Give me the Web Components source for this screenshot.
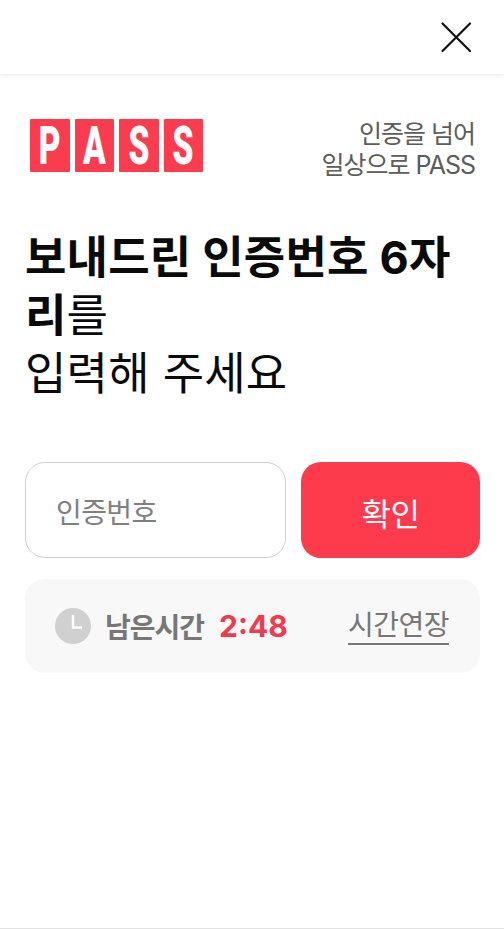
<!DOCTYPE html>
<html lang="ko">
<head>
<meta charset="utf-8">
<title>PASS</title>
<style>
  html, body { margin: 0; background: #fff; }
  body { font-family: Inter, "Noto Sans CJK KR", sans-serif; height: 929px; overflow: hidden; }
</style>
</head>
<body>
<pass-page>
  <top-bar></top-bar>
  <pass-brand>인증을 넘어<br>일상으로 PASS</pass-brand>
  <page-title><b>보내드린 인증번호 6자</b><b>리</b>를<br>입력해 주세요</page-title>
  <code-form placeholder="인증번호" action="확인"></code-form>
  <time-panel remain="2:48" extend="시간연장">남은시간</time-panel>
</pass-page>

<script>
  // small helper, every element has the same constructor otherwise
  class Base extends HTMLElement {
    constructor() {
      super();
      this.attachShadow({ mode: "open" });
    }
  }

  class PassPage extends Base {
    connectedCallback() {
      this.shadowRoot.innerHTML = `
        <style>
          :host { display: flex; flex-direction: column; height: 929px; box-sizing: border-box; border-bottom: 1px solid #e2e2e2; }
        </style>
        <slot></slot>`;
    }
  }

  class TopBar extends Base {
    connectedCallback() {
      this.shadowRoot.innerHTML = `
        <style>
          :host { display: flex; justify-content: flex-end; align-items: center; height: 74px; padding-right: 32px; box-shadow: 0 2px 4px rgba(0,0,0,.06); }
          svg { display: block; }
        </style>
        <svg width="32" height="32" viewBox="0 0 32 32" fill="none" stroke="#111" stroke-width="2.2" stroke-linecap="round" aria-label="닫기">
          <path d="M2.5 2.5 30 30M30 2.5 2.5 30"/>
        </svg>`;
    }
  }

  class PassBrand extends Base {
    connectedCallback() {
      const tiles = [..."PASS"].map(c => `<span class="tile"><i>${c}</i></span>`).join("");
      this.shadowRoot.innerHTML = `
        <style>
          :host { display: flex; justify-content: space-between; align-items: center; padding: 40px 29px 0 30px; height: 62px; }
          .logo { display: flex; gap: 5px; }
          .tile { width: 39.5px; height: 53px; background: #fb3c4e; border-radius: 1px; display: flex; align-items: center; justify-content: center; }
          /* the negative margin takes the unscaled width back out of the tile */
          i { display: block; margin: 0 -10px; font: 900 54px/53px Roboto, sans-serif; font-style: normal; color: #fff; transform: scaleX(.62); }
          .tag { padding-top: 10px; text-align: right; font-size: 25px; line-height: 31px; letter-spacing: -1px; color: #5c5c5c; }
        </style>
        <div class="logo">${tiles}</div>
        <div class="tag"><slot></slot></div>`;
    }
  }

  class PageTitle extends Base {
    connectedCallback() {
      this.shadowRoot.innerHTML = `
        <style>
          :host { display: block; margin: 53px 26px 0 25px; font-size: 45px; line-height: 58px; letter-spacing: .2px; color: #0a0a0a; word-break: break-all; }
          ::slotted(b) { font-weight: 700; }
        </style>
        <slot></slot>`;
    }
  }

  class CodeForm extends Base {
    connectedCallback() {
      this.shadowRoot.innerHTML = `
        <style>
          :host { display: flex; gap: 15px; margin: 59px 24px 0 25px; height: 96px; }
          input { width: 261px; box-sizing: border-box; border: 1px solid #cfcfcf; border-radius: 20px; padding: 5px 30px 0; font: 28px Inter, "Noto Sans CJK KR", sans-serif; letter-spacing: -.6px; outline: 0; background: #fff; }
          input::placeholder { color: #808080; opacity: 1; }
          button { flex: 1; border: 0; border-radius: 20px; padding: 4px 0 0; background: #fd3b4d; color: #fff; font: 32px Inter, "Noto Sans CJK KR", sans-serif; letter-spacing: -.5px; }
        </style>
        <input placeholder="${this.getAttribute("placeholder")}">
        <button>${this.getAttribute("action")}</button>`;
    }
  }

  class TimePanel extends Base {
    connectedCallback() {
      this.shadowRoot.innerHTML = `
        <style>
          :host { display: flex; align-items: center; margin: 21px 24px 0 25px; height: 94px; padding: 0 31px 0 30px; background: #f8f8f8; border-radius: 20px; font-size: 28px; letter-spacing: -1px; color: #777; }
          svg { display: block; margin-right: 14px; }
          .left { font-weight: 700; }
          .remain { font-weight: 700; font-size: 30px; color: #f13a4b; margin-left: 15px; letter-spacing: 0; }
          a { margin-left: auto; color: #777; text-decoration: none; border-bottom: 2px solid #777; line-height: 36px; letter-spacing: -.5px; }
        </style>
        <svg width="36" height="36" viewBox="0 0 36 36">
          <circle cx="18" cy="18" r="18" fill="#d0d0d0"/>
          <path d="M18 7V19.5H27" fill="none" stroke="#fff" stroke-width="2.4"/>
        </svg>
        <span class="left"><slot></slot></span>
        <span class="remain">${this.getAttribute("remain")}</span>
        <a href="#">${this.getAttribute("extend")}</a>`;
    }
  }

  customElements.define("pass-page", PassPage);
  customElements.define("top-bar", TopBar);
  customElements.define("pass-brand", PassBrand);
  customElements.define("page-title", PageTitle);
  customElements.define("code-form", CodeForm);
  customElements.define("time-panel", TimePanel);
</script>
</body>
</html>
